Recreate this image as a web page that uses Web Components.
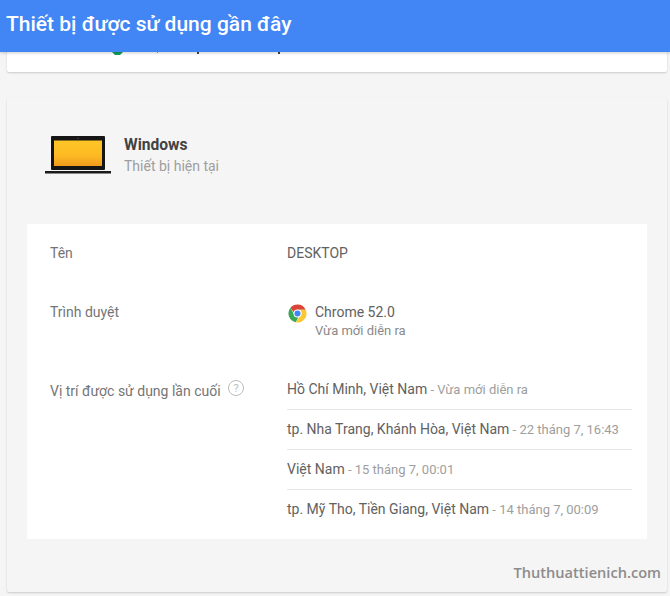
<!DOCTYPE html>
<html lang="vi">
<head>
<meta charset="utf-8">
<title>Thiết bị được sử dụng gần đây</title>
<style>
    html, body { margin: 0; padding: 0; }
    body { width: 670px; height: 596px; overflow: hidden; background: #f5f5f5; font-family: Roboto, "Liberation Sans", sans-serif; }
</style>
</head>
<body>
<device-page>
    <top-bar slot="bar">Thiết bị được sử dụng gần đây</top-bar>
    <prev-card slot="prev"></prev-card>
    <device-card slot="main">
        <device-head name="Windows" note="Thiết bị hiện tại"></device-head>
        <info-panel>
            <info-row label="Tên" style="--row-h:59px"><span>DESKTOP</span></info-row>
            <info-row label="Trình duyệt" style="--row-h:79px"><browser-line name="Chrome 52.0" when="Vừa mới diễn ra"></browser-line></info-row>
            <info-row label="Vị trí được sử dụng lần cuối" help>
                <place-line place="Hồ Chí Minh, Việt Nam" when="Vừa mới diễn ra"></place-line>
                <place-line place="tp. Nha Trang, Khánh Hòa, Việt Nam" when="22 tháng 7, 16:43"></place-line>
                <place-line place="Việt Nam" when="15 tháng 7, 00:01"></place-line>
                <place-line place="tp. Mỹ Tho, Tiền Giang, Việt Nam" when="14 tháng 7, 00:09" last></place-line>
            </info-row>
        </info-panel>
        <span slot="mark">Thuthuattienich.com</span>
    </device-card>
</device-page>

<script>
    class DevicePage extends HTMLElement {
        constructor() {
            super();
            this.attachShadow({ mode: 'open' });
            this.shadowRoot.innerHTML = `
            <style>
                :host { display: block; position: relative; height: 596px; overflow: hidden; }
                .bar { position: absolute; top: 0; left: 0; right: 0; z-index: 5; }
                .content { display: flex; flex-direction: column; gap: 26px; padding: 0 3px 0 7px; margin-top: -8px; }
            </style>
            <div class="bar"><slot name="bar"></slot></div>
            <div class="content">
                <slot name="prev"></slot>
                <slot name="main"></slot>
            </div>
            `;
        }
    }
    customElements.define('device-page', DevicePage);

    class TopBar extends HTMLElement {
        constructor() {
            super();
            this.attachShadow({ mode: 'open' });
            this.shadowRoot.innerHTML = `
            <style>
                :host {
                    display: flex;
                    align-items: center;
                    height: 52px;
                    padding: 0 6px 4px;
                    box-sizing: border-box;
                    background: #4285f4;
                    color: #fff;
                    font: 500 21px Roboto, "Liberation Sans", sans-serif;
                    box-shadow: 0 1px 3px rgba(0,0,0,.2);
                }
            </style>
            <slot></slot>
            `;
        }
    }
    customElements.define('top-bar', TopBar);

    // only the bottom of this card shows below the bar
    class PrevCard extends HTMLElement {
        constructor() {
            super();
            this.attachShadow({ mode: 'open' });
            this.shadowRoot.innerHTML = `
            <style>
                :host {
                    display: block;
                    position: relative;
                    height: 80px;
                    background: #fff;
                    border-radius: 0 0 2px 2px;
                    box-shadow: 0 1px 2px rgba(0,0,0,.18);
                }
                svg { position: absolute; left: 105px; top: 48px; }
                i { position: absolute; top: 60px; width: 2px; height: 2px; background: #444; }
            </style>
            <svg width="11" height="15" viewBox="0 0 11 15"><path d="M0 0h11v12l-3 3H3l-3-3z" fill="#0f9d58"/></svg>
            <i style="left:150px;width:1px;height:1px;background:#999"></i>
            <i style="left:190px"></i>
            <i style="left:271px"></i>
            `;
        }
    }
    customElements.define('prev-card', PrevCard);

    class DeviceCard extends HTMLElement {
        constructor() {
            super();
            this.attachShadow({ mode: 'open' });
            this.shadowRoot.innerHTML = `
            <style>
                :host {
                    display: block;
                    position: relative;
                    height: 494px;
                    padding: 0 20px;
                    background: #f5f5f5;
                    border-radius: 2px;
                    box-shadow: 0 1px 2px rgba(0,0,0,.18);
                }
                .mark {
                    position: absolute;
                    right: 6px;
                    top: 464px;
                    color: #8c8c8c;
                    font: 600 14.6px "Open Sans", "Liberation Sans", sans-serif;
                }
            </style>
            <slot></slot>
            <div class="mark"><slot name="mark"></slot></div>
            `;
        }
    }
    customElements.define('device-card', DeviceCard);

    class DeviceHead extends HTMLElement {
        constructor() {
            super();
            this.attachShadow({ mode: 'open' });
            this.shadowRoot.innerHTML = `
            <style>
                :host { display: flex; align-items: flex-start; height: 126px; padding: 38px 0 0 18px; box-sizing: border-box; }
                svg { display: block; width: 66px; height: 38px; margin-right: 13px; }
                .name { font-size: 15.6px; font-weight: 700; color: #424242; line-height: 20px; margin-top: -1px; }
                .note { font-size: 14px; color: #9e9e9e; line-height: 20px; margin-top: 1px; }
            </style>
            <svg viewBox="0 0 66 38">
                <defs>
                    <linearGradient id="scr" x1="0" y1="0" x2="0" y2="1">
                        <stop offset="0" stop-color="#ffc627"/>
                        <stop offset=".6" stop-color="#fdb924"/>
                        <stop offset="1" stop-color="#f09a1c"/>
                    </linearGradient>
                </defs>
                <rect x="6" y="0" width="54" height="34" rx="1" fill="#151515"/>
                <rect x="9" y="4.500" width="48" height="25.500" fill="url(#scr)"/>
                <circle cx="33" cy="2.300" r=".6" fill="#666"/>
                <rect x="0" y="35" width="66" height="2.500" fill="#1a1a1a"/>
            </svg>
            <div>
                <div class="name">${this.getAttribute('name')}</div>
                <div class="note">${this.getAttribute('note')}</div>
            </div>
            `;
        }
    }
    customElements.define('device-head', DeviceHead);

    class InfoPanel extends HTMLElement {
        constructor() {
            super();
            this.attachShadow({ mode: 'open' });
            this.shadowRoot.innerHTML = `
            <style>
                :host { display: block; height: 315px; padding: 0 15px 0 23px; background: #fff; box-sizing: border-box; }
            </style>
            <slot></slot>
            `;
        }
    }
    customElements.define('info-panel', InfoPanel);

    class InfoRow extends HTMLElement {
        constructor() {
            super();
            this.attachShadow({ mode: 'open' });
            let help = this.hasAttribute('help') ? `
                <svg width="16" height="16" viewBox="0 0 16 16">
                    <circle cx="8" cy="8" r="7.5" fill="none" stroke="#bdbdbd"/>
                    <text x="8" y="12" text-anchor="middle" font-size="11" fill="#bdbdbd">?</text>
                </svg>` : '';
            this.shadowRoot.innerHTML = `
            <style>
                :host { display: flex; min-height: var(--row-h, 0); color: #616161; font-size: 14px; }
                .label { width: 237px; flex: none; display: flex; gap: 8px; align-items: flex-start; padding-top: 20px; color: #757575; line-height: 18px; box-sizing: border-box; }
                .label svg { margin-top: -2px; margin-left: -1px; }
                .value { flex: 1; padding-top: 20px; line-height: 18px; color: #616161; }
                :host([help]) .value { padding-top: 8px; }
            </style>
            <div class="label"><span>${this.getAttribute('label')}</span>${help}</div>
            <div class="value"><slot></slot></div>
            `;
        }
    }
    customElements.define('info-row', InfoRow);

    class BrowserLine extends HTMLElement {
        constructor() {
            super();
            this.attachShadow({ mode: 'open' });
            this.shadowRoot.innerHTML = `
            <style>
                :host { display: flex; gap: 8px; align-items: flex-start; }
                svg { display: block; width: 19px; height: 19px; flex: none; margin: 1px 0 0 1px; }
                .name { line-height: 18px; color: #616161; }
                .when { font-size: 13px; line-height: 20px; color: #8a8a8a; }
            </style>
            <svg viewBox="0 0 20 20">
                <path d="M10 0.5a9.5 9.5 0 0 1 8.6 5.5H10a4 4 0 0 0-3.9 3L2.6 4A9.5 9.5 0 0 1 10 .5z" fill="#db4437"/>
                <path d="M2.6 4l4.1 7.5A4 4 0 0 0 11 14l-2.8 5.3A9.5 9.5 0 0 1 2.600 4z" fill="#3aa757"/>
                <path d="M18.600 6A9.500 9.500 0 0 1 8.200 19.300L13 12a4 4 0 0 0-.5-6z" fill="#fcc934"/>
                <circle cx="10" cy="10" r="4.200" fill="#fff"/>
                <circle cx="10" cy="10" r="3.200" fill="#4285f4"/>
            </svg>
            <div>
                <div class="name">${this.getAttribute('name')}</div>
                <div class="when">${this.getAttribute('when')}</div>
            </div>
            `;
        }
    }
    customElements.define('browser-line', BrowserLine);

    class PlaceLine extends HTMLElement {
        constructor() {
            super();
            this.attachShadow({ mode: 'open' });
            this.shadowRoot.innerHTML = `
            <style>
                :host { display: block; height: 40px; line-height: 38px; box-sizing: border-box; font-size: 14px; color: #616161; border-bottom: 1px solid #e6e6e6; white-space: nowrap; }
                :host([last]) { border-bottom: none; }
                .when { font-size: 13px; color: #9e9e9e; }
            </style>
            <span>${this.getAttribute('place')}</span><span class="when"> - ${this.getAttribute('when')}</span>
            `;
        }
    }
    customElements.define('place-line', PlaceLine);
</script>
</body>
</html>
